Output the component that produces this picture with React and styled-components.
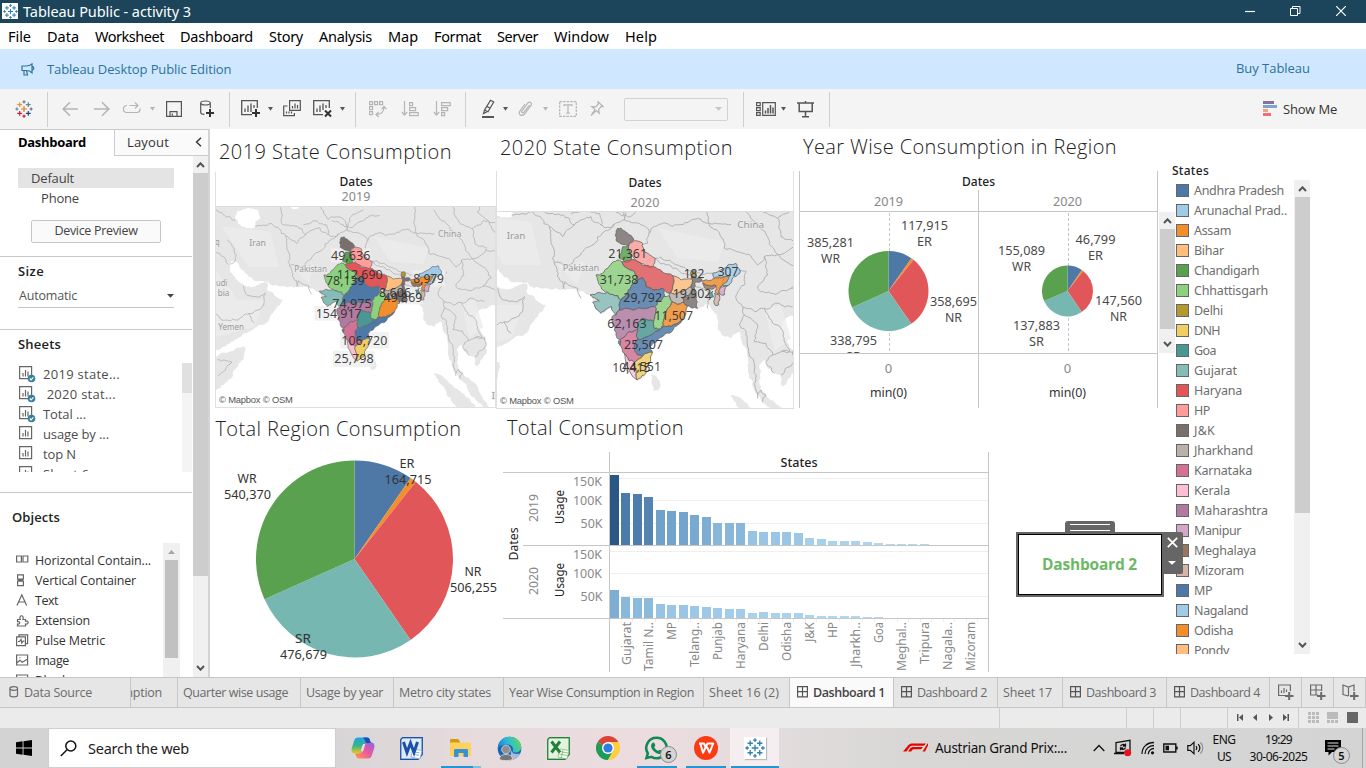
import React, { useLayoutEffect, useRef, useState } from "react";
import styled, { createGlobalStyle } from "styled-components";

const UI = `"Noto Sans", "Open Sans", sans-serif`;
const TAB = `"Open Sans", "Noto Sans", sans-serif`;

const Global = createGlobalStyle`
  * { box-sizing: border-box; }
  html, body { margin: 0; overflow: hidden; background: #fff; }
  body { font-family: ${TAB}; color: #444; }
  svg { display: block; overflow: hidden; flex: none; }
`;

/* ---------- shared pieces ---------- */
const Run = styled.span`
  display: inline-block;
  white-space: pre;
  flex: none;
  font-family: ${(p) => p.$font || TAB};
  font-size: ${(p) => p.$size || 13}px;
  font-weight: ${(p) => p.$weight || 400};
  color: ${(p) => p.$color || "inherit"};
`;

/* A single line of text whose tracking is adjusted to fill a column width. */
function Fit({ w, size, weight, color, font, children }) {
  const ref = useRef(null);
  const [track, setTrack] = useState(0);
  useLayoutEffect(() => {
    const natural = ref.current.getBoundingClientRect().width;
    setTrack((w - natural) / String(children).length);
  }, [w, children]);
  return (
    <Run ref={ref} $size={size} $weight={weight} $color={color} $font={font} style={{ letterSpacing: track }}>
      {children}
    </Run>
  );
}

const Icon = ({ w = 16, h = 16, children, vb, ...rest }) => (
  <svg width={w} height={h} viewBox={vb || `0 0 ${w} ${h}`} fill="none" stroke="currentColor" strokeWidth="1.2" {...rest}>
    {children}
  </svg>
);

const Window = styled.div`
  width: 1366px;
  height: 768px;
  display: flex;
  flex-direction: column;
  background: #fff;
`;

/* ---------- title, menu, banner ---------- */
const TitleBar = styled.header`
  height: 23px;
  background: #1c455b;
  color: #fff;
  display: flex;
  align-items: center;
  padding: 0 20px 1px 2px;
  gap: 5px;
`;
const LogoTile = styled.div`
  width: 16px;
  height: 16px;
  background: #fff;
  display: grid;
  place-items: center;
`;
const WindowButtons = styled.div`
  margin-left: auto;
  display: flex;
  gap: 35px;
`;
const MenuBar = styled.nav`
  height: 26px;
  display: flex;
  align-items: center;
  gap: 16px;
  padding: 0 0 1px 8px;
`;
const Banner = styled.div`
  height: 40px;
  background: #cfe8ff;
  display: flex;
  align-items: center;
  padding: 0 56px 0 21px;
  gap: 12px;
  color: #2d7299;
`;
const Push = styled.div`
  margin-left: auto;
  display: flex;
  align-items: center;
  padding-bottom: 2px;
`;

const Plus = ({ x, y, s = 2.4, c }) => <path d={`M${x - s} ${y}h${2 * s}M${x} ${y - s}v${2 * s}`} stroke={c} />;
const TableauMark = ({ size = 17, colors }) => {
  const c = colors || ["#e8762c", "#c72035", "#1f457e", "#59879b", "#eb912c", "#5b6591"];
  return (
    <Icon w={size} h={size} vb="0 0 18 18" strokeWidth="1.2">
      <Plus x={9} y={9} s={3} c={c[0]} />
      <Plus x={4.7} y={4.7} c={c[4]} />
      <Plus x={13.3} y={4.7} c={c[3]} />
      <Plus x={4.7} y={13.3} c={c[1]} />
      <Plus x={13.3} y={13.3} c={c[2]} />
      <Plus x={9} y={1.9} s={1.6} c={c[3]} />
      <Plus x={9} y={16.1} s={1.6} c={c[1]} />
      <Plus x={1.9} y={9} s={1.6} c={c[3]} />
      <Plus x={16.1} y={9} s={1.6} c={c[5]} />
    </Icon>
  );
};
const BLUE = Array(6).fill("#2f7fb3");

const MENU = [
  ["File", 23], ["Data", 32], ["Worksheet", 69], ["Dashboard", 73], ["Story", 34], ["Analysis", 53],
  ["Map", 30], ["Format", 47], ["Server", 41], ["Window", 55], ["Help", 32],
];

/* ---------- toolbar ---------- */
const Toolbar = styled.div`
  height: 40px;
  background: #f4f4f4;
  display: flex;
  align-items: center;
  color: #555;
`;
const Slot = styled.div`
  flex: none;
  width: ${(p) => p.$w}px;
  margin-left: ${(p) => p.$ml || 0}px;
  color: ${(p) => (p.$off ? "#b5b5b5" : "#555")};
`;
const Sep = styled.i`
  flex: none;
  width: 1px;
  height: 35px;
  background: #cfcfcf;
  margin-left: ${(p) => p.$ml}px;
`;
const Combo = styled.div`
  flex: none;
  width: 104px;
  height: 23px;
  margin: 0 0 0 20px;
  border: 1px solid #d2d2d2;
  border-radius: 2px;
  display: flex;
  align-items: center;
  justify-content: flex-end;
  padding-right: 5px;
  color: #c6c6c6;
`;
const Caret = ({ w = 5 }) => (
  <Icon w={w} h={4} vb="0 0 6 4" stroke="none" preserveAspectRatio="none"><path d="M0 0h6L3 3.8z" fill="currentColor" /></Icon>
);
const BigPlus = ({ x, y }) => <path d={`M${x - 4} ${y}h8M${x} ${y - 4}v8`} stroke="#333" strokeWidth="2" />;

function Tools() {
  return (
    <Toolbar>
      <Slot $w={18} $ml={15}><TableauMark size={18} /></Slot>
      <Sep $ml={14} />
      <Slot $w={16} $ml={14} $off><Icon strokeWidth="1.6"><path d="M16 8H1M8 1.2 1.2 8 8 14.8" /></Icon></Slot>
      <Slot $w={16} $ml={16} $off><Icon strokeWidth="1.6"><path d="M0 8h15M8 1.2 14.8 8 8 14.8" /></Icon></Slot>
      <Slot $w={18} $ml={13} $off><Icon w={18} h={14}><path d="M4 3.500H3.500a3 3 0 0 0-3 3v1a3 3 0 0 0 3 3h10.500a3 3 0 0 0 3-3v-1M6.500 3.500H15M12 .5l3 3-3 3" /></Icon></Slot>
      <Slot $w={5} $ml={9} $off><Caret /></Slot>
      <Slot $w={16} $ml={11}><Icon><path d="M.6.6h14.800v14.800H.6zM4 15v-4.400h7V15M6.300 12.500v2" /></Icon></Slot>
      <Slot $w={16} $ml={17}><Icon w={16} h={18}><path d="M1.7 3.2v9.3c0 1 1.4 1.8 3.7 1.9M11.300 3.200v4.800" /><ellipse cx="6.500" cy="3" rx="4.800" ry="2" /><BigPlus x={11} y={13} /></Icon></Slot>
      <Sep $ml={14} />
      <Slot $w={20} $ml={11}><Icon w={20} h={18}><path d="M11 14.600H.7V.7h15.600V8M4 12V8.500M7 12V5.500M10 12V3.500M13 8V5" strokeWidth="1.300" /><BigPlus x={15} y={13} /></Icon></Slot>
      <Slot $w={5} $ml={7}><Caret /></Slot>
      <Slot $w={18} $ml={10}><Icon w={18} h={18}><path d="M6.600.7h10.700v9.600H6.600zM9.500 8.500V6M12 8.500V3.500M14.500 8.500V5M4.500 6H.7v9.700h10.700V13M3.500 13.500v-2M6 13.500v-2M8.500 13.500v-2" /></Icon></Slot>
      <Slot $w={20} $ml={12}><Icon w={20} h={18}><path d="M10 14.600H.7V.7h15.600V8M4 12V8.500M7 12V5.500M10 10V3.500M13 8V5" strokeWidth="1.300" /><path d="m12 10.500 6 6M18 10.500l-6 6" stroke="#333" strokeWidth="2" /></Icon></Slot>
      <Slot $w={5} $ml={7}><Caret /></Slot>
      <Sep $ml={10} />
      <Slot $w={18} $ml={13} $off><Icon w={18} h={18}><path d="M.6 1.600h3v3h-3zM5.600 1.600h3v3h-3zM10.600 1.600h3v3h-3zM.6 6.600h3v3h-3zM.6 11.600h3v3h-3zM15 7c0 5-3 7.500-7.500 7.500M12.500 9.200 15 6.500l2.500 2.700M9.800 12 7 14.500l2.800 2.500" /></Icon></Slot>
      <Slot $w={18} $ml={14} $off><Icon w={18} h={16}><path d="M3.500 0v14M.8 11l2.700 3 2.700-3M8.600 1.600h3v3h-3zM8.600 6.600h6v3h-6zM8.600 11.600h8.600v3H8.600z" /></Icon></Slot>
      <Slot $w={18} $ml={14} $off><Icon w={18} h={16}><path d="M3.500 0v14M.8 11l2.700 3 2.700-3M8.600 1.600h8.600v3H8.600zM8.600 6.600h6v3h-6zM8.600 11.600h3v3h-3z" /></Icon></Slot>
      <Sep $ml={14} />
      <Slot $w={14} $ml={16}><Icon w={14} h={20}><path d="M8.500 1.200 11.700 3 6 12.800l-3.500-1.700zM4.800 7.300l3.300 1.900M2.500 11.200 1.500 14.500l3.500-1.800" /><path d="M0 18h12" strokeWidth="2" /></Icon></Slot>
      <Slot $w={5} $ml={7}><Caret /></Slot>
      <Slot $w={16} $ml={10} $off><Icon w={16} h={18}><path d="M11.500 5 6 12.200c-1.300 1.500-3 .2-2-1.300L9.600 3.300c2-2.300 5-.4 3.400 2L6.500 14c-2.700 3-6.700.5-4.600-3L7 4" /></Icon></Slot>
      <Slot $w={5} $ml={9} $off><Caret /></Slot>
      <Slot $w={18} $ml={11} $off><Icon w={18} h={16}><path d="M.7.7h16.600v14.600H.7z" strokeDasharray="2.500 1" /><path d="M5 5.200V3.800h8v1.400M9 3.800v8.400M7.300 12.200h3.400" /></Icon></Slot>
      <Slot $w={14} $ml={13} $off><Icon w={14} h={16}><path d="m8 .8 5.200 4.700-2-.2-2.500 3.200.5 3.700-2.800-2.700L1 14.500l4-6L1.800 5.700l4 .1L8.300 3z" /></Icon></Slot>
      <Combo><Caret w={7} /></Combo>
      <Sep $ml={15} />
      <Slot $w={20} $ml={12}><Icon w={20} h={16}><path d="M.6 1.600h3.600v3H.6zM.6 6.600h3.600v3H.6zM.6 11.600h3.600v2.800H.6zM6.700 1.600h12.600v12.800H6.700z" /><path d="M9.500 12.500v-3M12 12.500V7M14.500 12.500V4M17 12.500V6.500" strokeWidth="1.500" /></Icon></Slot>
      <Slot $w={5} $ml={5}><Caret /></Slot>
      <Slot $w={18} $ml={11}><Icon w={18} h={17}><path d="M0 2h17M2.200 2v8.500h13V2M8.500 0v2M8.500 10.500v5M5 15.800h7" strokeWidth="1.500" /></Icon></Slot>
      <Sep $ml={14} />
      <Push>
        <Slot $w={20}>
          <Icon w={15} h={17} stroke="none">
            <rect y="1" width="11" height="3" fill="#86719b" /><rect y="5" width="14" height="3" fill="#7fa3cf" />
            <rect y="9" width="5" height="3" fill="#f2a57c" /><rect y="13" width="8" height="3" fill="#f96a77" />
          </Icon>
        </Slot>
        <Slot $w={83}><Fit w={54} size={13} color="#333">Show Me</Fit></Slot>
      </Push>
    </Toolbar>
  );
}

/* ---------- side pane ---------- */
const Body = styled.main`
  height: 548px;
  display: flex;
`;
const Side = styled.aside`
  width: 210px;
  flex: none;
  border-top: 1px solid #c9c9c9;
  border-right: 2px solid #d4d4d4;
  display: flex;
  flex-direction: column;
`;
const SideTabs = styled.div`
  height: 26px;
  flex: none;
  display: flex;
`;
const SideTab = styled.div`
  flex: ${(p) => (p.$on ? "0 0 114px" : "1")};
  display: flex;
  align-items: center;
  justify-content: space-between;
  padding: 0 6px ${(p) => (p.$on ? 3 : 1)}px ${(p) => (p.$on ? 18 : 12)}px;
  color: ${(p) => (p.$on ? "#000" : "#333")};
  ${(p) => !p.$on && "background:#fafafa;border-left:1px solid #ccc;border-bottom:1px solid #ccc;"}
`;
const SideBody = styled.div`
  display: flex;
  height: 521px;
`;
const SideContent = styled.div`
  width: 193px;
  flex: none;
  overflow: hidden;
`;
const DeviceRow = styled.div`
  margin: ${(p) => (p.$on ? "12px 19px 0 18px" : "0 19px 0 18px")};
  height: 20px;
  padding-left: ${(p) => (p.$on ? 13 : 23)}px;
  display: flex;
  align-items: center;
  background: ${(p) => (p.$on ? "#e4e4e4" : "none")};
`;
const Button = styled.div`
  width: 130px;
  height: 23px;
  margin: 12px 0 13px 31px;
  border: 1px solid #c6c6c6;
  border-radius: 2px;
  background: #fafafa;
  display: flex;
  align-items: center;
  justify-content: center;
  padding-bottom: 2px;
`;
const Section = styled.section`
  width: 192px;
  height: ${(p) => p.$h}px;
  border-top: 1px solid #c9c9c9;
  overflow: hidden;
`;
const Heading = styled.h3`
  margin: ${(p) => p.$top}px 0 0 ${(p) => p.$left}px;
  height: 20px;
  display: flex;
  align-items: center;
  color: #222;
`;
const Select = styled.div`
  margin: 5px 0 0 18px;
  width: 156px;
  height: 22px;
  display: flex;
  align-items: center;
  justify-content: space-between;
  padding: 0 0 2px 1px;
  border-bottom: 1px solid #c6c6c6;
`;
const ListWrap = styled.div`
  display: flex;
  height: ${(p) => p.$h}px;
  margin: ${(p) => p.$m};
  overflow: hidden;
`;
const List = styled.div`
  width: ${(p) => p.$w}px;
  padding-top: ${(p) => p.$pt || 0}px;
`;
const Row = styled.div`
  height: 20px;
  display: flex;
  align-items: center;
  gap: ${(p) => p.$gap}px;
  color: #4d4d4d;
`;
const MiniTrack = styled.div`
  width: 10px;
  background: #f4f4f4;
  &::before { content: ""; display: block; height: 30px; background: #e0e0e0; }
`;
const Track = styled.div`
  width: ${(p) => p.$w || 16}px;
  height: ${(p) => p.$h}px;
  background: #f0f0f0;
  display: flex;
  flex-direction: column;
  align-items: center;
  flex: none;
  color: #555;
`;
const Thumb = styled.div`
  width: ${(p) => p.$w || 15}px;
  height: ${(p) => p.$h}px;
  margin-bottom: auto;
  background: ${(p) => p.$c || "#cdcdcd"};
`;
const ArrowBox = styled.div`
  height: 17px;
  display: grid;
  place-items: center;
  transform: ${(p) => (p.$down ? "rotate(180deg)" : "none")};
`;
const Arrow = ({ down }) => (
  <ArrowBox $down={down}><Icon w={9} h={6} strokeWidth="2"><path d="m1 5 3.500-3.700L8 5" /></Icon></ArrowBox>
);
const Scroll = ({ h, w, thumb }) => (
  <Track $h={h} $w={w}><Arrow /><Thumb $h={thumb} /><Arrow down /></Track>
);

const SheetIcon = ({ used }) => (
  <Icon w={17} h={18} color="#666">
    <path d="M.6 1.600h12v12H.6zM4 11.500V8M6.500 11.500V5M9 11.500V6.500" />
    {used && <g><circle cx="12.500" cy="13.500" r="3.800" fill="#35809f" stroke="none" /><path d="m10.800 13.500 1.300 1.300 2.300-2.400" stroke="#fff" /></g>}
  </Icon>
);
const SHEETS = [
  ["2019 state...", 77, 1], [" 2020 stat...", 73, 1], ["Total ...", 43, 1], ["usage by ...", 66, 0], ["top N", 33, 0], ["Sheet 6", 46, 0],
];
const OBJECTS = [
  ["Horizontal Contain...", 116, <path key="i" d="M.6 2h4.800v6H.6zM7 2h4.800v6H7z" />],
  ["Vertical Container", 101, <path key="i" d="M1.600.8h5.800v4.400H1.600zM1.600 7.200h5.800v4.400H1.600zM2 6.200h5" />],
  ["Text", 23, <path key="i" d="M1 11.500 5.800.8l4.800 10.700M2.700 8h6.200" />],
  ["Extension", 55, <path key="i" d="M1.500 5.500h2.700C2.500.5 8.500.5 7 5.500h2.500v1.700c3.500-1 3.500 3.500 0 2.800v2h-8V10c3 .6 3-3 0-2.300z" />],
  ["Pulse Metric", 70, <path key="i" d="M.6 2.800h8.800v8.800H.6zM3 2.800V.8h8.600v8.800H9.500M2 7.500h1.500L5 5.500l.8 3.500L7 7.200h1.300" />],
  ["Image", 34, <path key="i" d="M.6 1h11v10H.6zM.6 9 4 6.200l2.200 2 5.200-3M3.500 3.600h.8" />],
  ["Blank", 34, <path key="i" d="M.6 1h11v10H.6z" />],
];

function SidePane() {
  return (
    <Side>
      <SideTabs>
        <SideTab $on><Fit w={68} size={13} weight={700}>Dashboard</Fit></SideTab>
        <SideTab><Fit w={42} size={13}>Layout</Fit><Icon w={7} h={10} strokeWidth="1.400"><path d="M6 .8 1.500 5 6 9.200" /></Icon></SideTab>
      </SideTabs>
      <SideBody>
        <SideContent>
          <DeviceRow $on><Fit w={43} size={13}>Default</Fit></DeviceRow>
          <DeviceRow><Fit w={38} size={13}>Phone</Fit></DeviceRow>
          <Button><Fit w={83} size={12.5}>Device Preview</Fit></Button>
          <Section $h={73}>
            <Heading $top={4} $left={18}><Fit w={26} size={13} weight={600}>Size</Fit></Heading>
            <Select><Fit w={58} size={12.5} color="#555">Automatic</Fit><Caret w={7} /></Select>
          </Section>
          <Section $h={163}>
            <Heading $top={4} $left={18}><Fit w={43} size={13} weight={600}>Sheets</Fit></Heading>
            <ListWrap $h={109} $m="9px 0 0 19px">
              <List $w={163} $pt={1}>
                {SHEETS.map(([t, w, used]) => (
                  <Row key={t} $gap={7}><SheetIcon used={used} /><Fit w={w} size={13}>{t}</Fit></Row>
                ))}
              </List>
              <MiniTrack />
            </ListWrap>
          </Section>
          <Section $h={185}>
            <Heading $top={14} $left={12}><Fit w={48} size={13} weight={600}>Objects</Fit></Heading>
            <ListWrap $h={134} $m="16px 0 0 16px">
              <List $w={147} $pt={7}>
                {OBJECTS.map(([t, w, d]) => (
                  <Row key={t} $gap={6}><Icon w={13} h={13} color="#666">{d}</Icon><Fit w={w} size={12.5} color="#333">{t}</Fit></Row>
                ))}
              </List>
              <Track $h={150} $w={17}>
                <ArrowBox><Icon w={7} h={4} stroke="none"><path d="M0 4h7L3.500 0z" fill="#a5a5a5" /></Icon></ArrowBox>
                <Thumb $h={98} $w={13} $c="#c1c1c1" />
              </Track>
            </ListWrap>
          </Section>
        </SideContent>
        <Scroll h={521} w={15} thumb={403} />
      </SideBody>
    </Side>
  );
}

/* ---------- maps ---------- */
/* Outlines are broken into short uneven steps; the offset depends only on the
   two end points, so neighbours that share an edge stay aligned. */
function rough(str, closed, amp = 4) {
  const pts = str.trim().split(/\s+/).map((p) => p.split(",").map(Number));
  if (closed) pts.push(pts[0]);
  const out = [pts[0]];
  const split = (a, b, depth) => {
    const len = Math.hypot(b[0] - a[0], b[1] - a[1]);
    if (len < 9 || depth > 4) { out.push(b); return; }
    const flip = a[0] + a[1] * 2 > b[0] + b[1] * 2 ? -1 : 1;
    const r = Math.sin((a[0] + b[0]) * 12.9898 + (a[1] + b[1]) * 78.233) * 43758.5453;
    const off = (r - Math.floor(r) - 0.5) * Math.min(amp * 2, len * 0.4) * flip;
    const m = [(a[0] + b[0]) / 2 - ((b[1] - a[1]) / len) * off, (a[1] + b[1]) / 2 + ((b[0] - a[0]) / len) * off];
    split(a, m, depth + 1);
    split(m, b, depth + 1);
  };
  for (let i = 1; i < pts.length; i++) split(pts[i - 1], pts[i], 0);
  return "M" + out.map((p) => p.map((v) => v.toFixed(1)).join(" ")).join("L") + (closed ? "Z" : "");
}

const LAND = [
  "-90,60 980,60 980,430 940,440 880,465 870,490 875,520 910,560 915,610 900,635 875,665 868,630 850,625 830,610 820,585 805,600 808,640 815,680 850,710 880,740 905,790 930,840 915,840 885,800 850,760 825,720 800,690 785,650 770,600 762,545 745,500 722,518 700,515 680,480 668,440 650,415 620,430 590,425 575,465 500,525 478,545 484,562 462,630 438,647 410,600 384,530 372,500 363,455 372,452 362,428 330,445 312,425 305,412 297,390 275,378 215,372 130,370 110,352 60,350 25,320 0,285 -25,280 -30,300 -8,345 25,368 60,372 108,355 108,385 135,405 165,420 140,455 110,500 70,520 20,545 -25,575 -90,610",
  "-90,628 -30,610 26,592 20,640 -26,710 -90,760",
  "480,622 494,632 507,655 503,676 487,678 481,655",
  "718,690 750,700 800,745 860,800 890,840 830,840 780,780 735,720",
];
const SEAS = [
  "-5,95 30,85 75,90 82,118 65,130 62,155 30,158 0,140 -12,120",
  "195,60 225,60 222,85 200,88",
];
const BORDERS = [
  "-90,80 -50,110 -10,130", "62,150 120,140 175,185 180,235 190,295 200,335 220,370",
  "175,185 215,215 250,180 300,155 330,180 370,182", "190,295 245,295 275,260 320,215 360,190",
  "150,60 165,145 215,150 250,180", "330,180 325,145 290,130 240,145", "300,60 330,125 380,120 400,165",
  "360,190 400,165 445,175 475,200 470,235 455,240", "475,205 505,178 560,180 620,160 655,175 720,178",
  "345,130 410,155 470,120 520,110", "400,165 410,120 460,90",
  "493,280 545,310 605,330 632,342", "493,280 510,276 560,300 600,318 632,330 665,325", "745,315 765,318 760,360 740,380 735,400 755,425 760,450",
  "640,60 655,180 690,215 700,250 760,265 800,300 820,275 880,265 910,235 980,240",
  "720,90 750,130 800,175 830,215 850,255 900,300", "790,80 815,140 860,160 900,130 980,150",
  "860,160 870,215 915,230", "820,275 830,330 800,370 845,385 900,370 980,400", "900,300 930,340 900,370",
  "755,425 790,440 820,430 860,415 905,425", "760,450 745,480 765,510 770,545 790,600 800,690",
  "760,450 785,465 800,490 790,530 825,535 845,570 870,560", "820,430 835,460 860,480 880,520 895,560 870,560",
  "845,570 825,590 850,625", "870,560 905,560 910,590 870,630", "800,700 810,675 825,690 815,710",
  "610,355 632,370 655,378 652,405 650,430", "215,372 222,350 260,370 270,400",
  "-90,470 -40,495 0,495 40,470 60,505", "40,470 95,440 100,395", "-40,200 -15,240 -10,275 -30,290",
  "-90,240 -60,260 -35,290", "-75,640 -22,650 -75,700", "900,60 880,100 920,130 950,180", "20,370 30,400 80,410 100,395",
];
const STATES = [
  ["#79706e", "380,190 390,189 410,205 428,222 418,232 412,242 395,238 376,228 374,208"],
  ["#ff9d9a", "415,235 430,226 455,235 462,262 480,272 493,280 485,305 465,303 450,295 430,280 415,262 412,245"],
  ["#59a14f", "395,245 412,243 420,270 422,285 400,290 385,280 392,262"],
  ["#e15759", "400,290 425,283 440,290 452,300 478,305 515,322 545,332 548,355 535,385 520,375 480,370 465,365 455,338 440,345 432,325 412,312 392,290"],
  ["#8cd17d", "378,285 392,290 412,312 432,325 440,345 420,365 412,375 400,395 390,405 380,392 350,382 330,365 320,345 315,330 335,325 350,310 368,290"],
  ["#86bcb6", "297,390 325,382 350,382 380,392 390,405 385,435 375,450 362,425 350,430 330,445 312,425 305,412 325,408 315,402"],
  ["#4e79a7", "440,345 455,338 465,365 480,370 520,375 520,395 500,410 492,425 470,430 435,433 400,430 385,435 390,405 400,395 412,375 420,365"],
  ["#b07aa1", "385,435 400,430 435,433 470,430 492,425 488,470 470,465 455,460 440,475 440,490 415,500 388,525 375,510 370,480 363,455 375,450"],
  ["#499894", "440,475 455,460 470,465 488,470 490,490 512,490 480,510 445,525 440,520 440,490"],
  ["#8cd17d", "520,395 535,392 543,410 530,430 520,455 512,490 490,490 488,470 492,425 500,410"],
  ["#ffbe7d", "545,332 570,345 605,345 600,365 575,380 535,385 548,355"],
  ["#bab0ac", "535,385 575,380 600,365 605,380 575,400 578,412 560,418 543,410 535,392"],
  ["#79706e", "605,345 600,335 632,342 625,352 610,355 615,390 620,430 600,428 578,412 575,400 605,380 600,365"],
  ["#f28e2b", "543,410 560,418 578,412 590,422 585,435 575,465 550,478 512,490 520,455 530,430"],
  ["#4e79a7", "575,465 560,480 535,505 500,525 478,545 484,562 455,573 440,570 430,545 440,520 445,525 480,510 512,490 550,478"],
  ["#d37295", "388,525 415,500 440,490 440,520 430,545 440,570 455,573 430,592 412,585 400,565 390,545"],
  ["#499894", "383,527 390,530 388,540 382,535"],
  ["#fabfd2", "400,565 412,585 430,592 432,610 435,630 438,645 425,635 410,605"],
  ["#f1ce63", "430,592 455,573 484,562 478,590 465,610 460,630 438,645 435,630 432,610"],
  ["#a0cbe8", "665,325 700,310 715,298 735,295 738,305 748,318 730,335 718,355 708,362 692,362 700,335 670,340"],
  ["#f28e2b", "630,345 665,342 700,335 720,330 710,345 690,365 685,388 672,380 675,362 640,358"],
  ["#9d7660", "635,355 675,362 670,370 640,368"],
  ["#499894", "652,385 665,378 668,395 655,405"],
  ["#d7b5a6", "670,385 685,390 683,420 675,422"],
  ["#d4a6c8", "688,365 710,362 700,390 685,385"],
  ["#b6992d", "600,320 612,318 613,334 601,334"],
];

const MapNum = styled.text`
  font-family: ${UI};
  font-size: ${(p) => p.$s}px;
  fill: #2b2b2b;
  fill-opacity: 0.9;
`;
const Place = styled.text`
  font-family: ${UI};
  font-size: 26px;
  fill: #999;
  stroke: #ededed;
  stroke-width: 3px;
  paint-order: stroke;
`;

/* Map units are one third of a pixel. */
function IndiaMap({ w, h, vb, scale, opacity, places, numbers, boxes }) {
  const shift = scale === 1 ? undefined : `translate(81 61) scale(${scale})`;
  return (
    <svg width={w} height={h} viewBox={vb} strokeLinejoin="round">
      <g transform={shift}>
        {LAND.map((d) => <path key={d} d={rough(d, true, 5)} fill="#e6e6e6" />)}
        <path d="M-90 300 0 420 100 420 60 520-90 560ZM500 190 700 230 680 290 560 280ZM200 300 280 290 260 360ZM820 430 870 420 900 520 850 560ZM-60 150 120 170 150 300 40 300Z" fill="#ececec" opacity=".8" />
        {SEAS.map((d) => <path key={d} d={rough(d, true)} fill="#fff" />)}
        {BORDERS.map((d) => <path key={d} d={rough(d, false, 6)} fill="none" stroke="#b3b3b3" strokeWidth="3" />)}
      </g>
      {boxes.map((b) => <rect key={b} x={b[0]} y={b[1]} width={b[2]} height={b[3]} fill="#eee" opacity=".85" />)}
      {places.map(([t, x, y, len]) => <Place key={t} x={x} y={y} textLength={len} lengthAdjust="spacingAndGlyphs">{t}</Place>)}
      <g transform={shift} fillOpacity={opacity}>
        {STATES.map(([c, d]) => <path key={d} d={rough(d, true)} fill={c} stroke="#666" strokeWidth="2.500" />)}
      </g>
      {numbers.map(([t, x, y, len]) => (
        <MapNum key={t} $s={38} x={x} y={y} textLength={len} lengthAdjust="spacingAndGlyphs">{t}</MapNum>
      ))}
    </svg>
  );
}

/* ---------- dashboard zones ---------- */
const Canvas = styled.div`
  flex: 1;
  display: flex;
  position: relative;
`;
const Charts = styled.div`
  width: 960px;
  display: flex;
  flex-direction: column;
`;
const ZoneRow = styled.div`
  display: flex;
  height: ${(p) => p.$h}px;
  padding-left: 5px;
`;
const Zone = styled.section`
  width: ${(p) => p.$w}px;
  margin-right: ${(p) => p.$mr || 0}px;
  flex: none;
`;
const ScrollZone = styled(Zone)`
  padding-top: 83px;
`;
const ZoneTitle = styled.h2`
  margin: 0;
  height: ${(p) => p.$h}px;
  padding: ${(p) => p.$pt}px 0 0 ${(p) => p.$pl || 4}px;
  line-height: 26px;
  color: #222;
`;
const MapHead = styled.div`
  height: ${(p) => p.$h}px;
  border-left: 1px solid #e0e0e0;
  border-right: ${(p) => (p.$right ? 1 : 0)}px solid #e0e0e0;
  border-bottom: 1px solid #ddd;
  display: flex;
  flex-direction: column;
  align-items: center;
  padding-top: ${(p) => p.$pt}px;
  line-height: ${(p) => p.$lh}px;
`;
const MapFrame = styled.div`
  position: relative;
  height: ${(p) => p.$h}px;
  border: 1px solid #e0e0e0;
  border-top: 0;
  overflow: hidden;
`;
const Credit = styled.div`
  position: absolute;
  left: 0;
  bottom: 0;
  padding: 0 4px 1px 3px;
  background: rgba(255, 255, 255, 0.6);
  font: 9.4px/13px "Liberation Sans", sans-serif;
  letter-spacing: -0.02em;
  color: #555;
`;
const Label = styled.text`
  font-family: ${UI};
  font-size: ${(p) => p.$s || 13}px;
  font-weight: ${(p) => p.$b || 400};
  fill: ${(p) => p.$c || "#4a4a4a"};
  text-anchor: middle;
`;
const Txt = ({ x, y, len, turn, children, ...p }) => (
  <Label x={x} y={y} textLength={len} lengthAdjust="spacingAndGlyphs" transform={turn ? `rotate(-90 ${x} ${y})` : undefined} {...p}>
    {children}
  </Label>
);

const PIE_COLORS = ["#4e79a7", "#f28e2b", "#e15759", "#76b7b2", "#59a14f"];
function Pie({ cx, cy, r, values }) {
  const total = values.reduce((a, b) => a + b, 0);
  let a = 0;
  const at = (t) => `${(cx + r * Math.sin(t)).toFixed(2)} ${(cy - r * Math.cos(t)).toFixed(2)}`;
  return values.map((v, i) => {
    const from = a;
    a += (v / total) * Math.PI * 2;
    return <path key={i} d={`M${cx} ${cy}L${at(from)}A${r} ${r} 0 0 1 ${at(a)}Z`} fill={PIE_COLORS[i]} />;
  });
}

function RegionByYear() {
  const line = { stroke: "#c6c6c6", strokeWidth: 1, shapeRendering: "crispEdges" };
  const pair = (num, name, x, y, len = 47) => (
    <g key={num}><Txt x={x} y={y} len={len}>{num}</Txt><Txt x={x} y={y + 16} len={name === "WR" ? 19 : name === "NR" ? 17 : 15}>{name}</Txt></g>
  );
  return (
    <svg width="360" height="237" viewBox="799 171 360 237">
      <clipPath id="plot"><rect x="800" y="212" width="357" height="141" /></clipPath>
      <g {...line}>
        <path d="M799.500 171v237M1157.500 171v237M978.500 190v218M799 211.500h359M799 353.500h359" />
        <path d="M889.500 213v140M1068.500 213v140" strokeDasharray="3 2" />
      </g>
      <Txt x={978.500} y={186} len={33} $b={500} $c="#222" $s={12}>Dates</Txt>
      <Txt x={888.500} y={206} len={29} $c="#888">2019</Txt>
      <Txt x={1067.500} y={206} len={29} $c="#888">2020</Txt>
      <Pie cx={888.500} cy={291} r={40} values={[117915, 13000, 358695, 338795, 385281]} />
      <Pie cx={1067.500} cy={291} r={25.500} values={[46799, 5200, 147560, 137883, 155089]} />
      <g clipPath="url(#plot)">
        {pair("117,915", "ER", 924.500, 230)}
        {pair("385,281", "WR", 830.500, 247)}
        {pair("358,695", "NR", 953.500, 306)}
        {pair("338,795", "SR", 853.500, 344.500)}
        {pair("46,799", "ER", 1095.500, 244, 40)}
        {pair("155,089", "WR", 1021.500, 255)}
        {pair("147,560", "NR", 1118.500, 305)}
        {pair("137,883", "SR", 1036.500, 330)}
      </g>
      {[888.500, 1067.500].map((x) => (
        <g key={x}><Txt x={x} y={373} $c="#888">0</Txt><Txt x={x} y={397} len={37} $c="#333">min(0)</Txt></g>
      ))}
    </svg>
  );
}

function TotalPie() {
  const rows = [["ER", 407, 468, 15], ["164,715", 408, 484, 47], ["WR", 247, 483, 19], ["540,370", 247.500, 499, 47], ["NR", 473, 576, 17], ["506,255", 473.500, 592, 47], ["SR", 303, 643, 16], ["476,679", 303.500, 659, 47]];
  return (
    <svg width="288" height="226" viewBox="215 451 288 226">
      <Pie cx={354.500} cy={559} r={98.500} values={[164715, 17500, 506255, 476679, 540370]} />
      {rows.map(([t, x, y, len]) => <Txt key={t} x={x} y={y} len={len} $c="#333">{t}</Txt>)}
    </svg>
  );
}

const BARS = [
  [70, 52, 51, 48, 35, 34, 33, 30, 28, 22, 22, 22, 14, 13, 13, 13, 12, 7, 6, 4, 4, 4, 3, 2, 1, 1, 1, 1],
  [28, 21, 20, 20, 14, 13, 13, 12, 11, 10, 9, 9, 5, 6, 5, 5, 5, 3, 2, 2, 2, 2, 1, 1],
];
const RAMP = [[179, 218, 240], [145, 190, 224], [112, 161, 201], [74, 122, 169], [42, 87, 131]];
const shade = (v) => {
  const t = Math.min(0.9999, v / 70) * 4;
  const i = Math.floor(t);
  return `rgb(${RAMP[i].map((c, k) => Math.round(c + (RAMP[i + 1][k] - c) * (t - i))).join(",")})`;
};
const BAR_NAMES = [
  ["Gujarat", 43], ["Tamil N..", 49], ["MP", 18], ["Telang..", 45], ["Punjab", 38], ["Haryana", 47], ["Delhi", 29], ["Odisha", 39],
  ["J&K", 20], ["HP", 16], ["Jharkh..", 45], ["Goa", 21], ["Meghal..", 49], ["Tripura", 42], ["Nagala..", 48], ["Mizoram", 49],
];
const NameLabel = styled(Label)`
  text-anchor: end;
`;

function StateBars() {
  return (
    <svg width="488" height="225" viewBox="502 452 488 225">
      <g stroke="#efefef" shapeRendering="crispEdges">
        <path d="M610 478.500h379M610 500.500h379M610 523.500h379M610 551.500h379M610 573.500h379M610 596.500h379" />
        {BAR_NAMES.map((n, i) => <path key={n[0]} d={`M${621 + i * 23} 619v3M${632.500 + i * 23} 619v3`} />)}
      </g>
      {BARS.map((set, r) => set.map((h, i) => (
        <rect key={`${r}-${i}`} x={Math.round(610 + i * 11.480)} y={(r ? 618 : 545) - h} width="9" height={h} fill={shade(h)} shapeRendering="crispEdges" />
      )))}
      <path d="M609.500 452v220M988.500 452v220M503 472.500h486M523 545.500h466M503 618.500h486" stroke="#c6c6c6" shapeRendering="crispEdges" />
      <Txt x={799} y={467} len={37} $b={500} $c="#222" $s={12}>States</Txt>
      {[0, 73].map((o) => (
        <g key={o}>
          <Txt x={587.500} y={486 + o} len={29} $c="#888">150K</Txt>
          <Txt x={587.500} y={505 + o} len={29} $c="#888">100K</Txt>
          <Txt x={591.500} y={528 + o} len={22} $c="#888">50K</Txt>
          <Txt x={563.500} y={507 + o} len={34} turn $c="#222">Usage</Txt>
          <Txt x={538} y={508 + o} len={28} turn $c="#888">{o ? "2020" : "2019"}</Txt>
        </g>
      ))}
      <Txt x={518} y={544} len={33} turn $c="#222">Dates</Txt>
      {BAR_NAMES.map(([t, len], i) => {
        const x = 630.5 + i * 22.99;
        return <NameLabel key={t} x={x} y={622} textLength={len} lengthAdjust="spacingAndGlyphs" transform={`rotate(-90 ${x} 622)`} $c="#888">{t}</NameLabel>;
      })}
    </svg>
  );
}

/* ---------- legend ---------- */
const LegendZone = styled.section`
  width: 140px;
  padding-top: 31px;
`;
const LegendTitle = styled.div`
  height: 20px;
  padding-left: 2px;
  line-height: 19px;
`;
const LegendBody = styled.div`
  display: flex;
  height: 474px;
  overflow: hidden;
`;
const LegendList = styled.div`
  width: 124px;
  padding-left: 6px;
`;
const LegendRow = styled.div`
  display: flex;
  align-items: center;
  gap: 5px;
  height: 20px;
`;
const Swatch = styled.i`
  width: 13px;
  height: 13px;
  flex: none;
  border: 1px solid #666;
  background: ${(p) => p.$c};
`;
const LEGEND = [
  ["Andhra Pradesh", "#4e79a7", 90], ["Arunachal Prad..", "#a0cbe8", 93], ["Assam", "#f28e2b", 37], ["Bihar", "#ffbe7d", 30],
  ["Chandigarh", "#59a14f", 65], ["Chhattisgarh", "#8cd17d", 74], ["Delhi", "#b6992d", 29], ["DNH", "#f1ce63", 26],
  ["Goa", "#499894", 22], ["Gujarat", "#86bcb6", 43], ["Haryana", "#e15759", 48], ["HP", "#ff9d9a", 16], ["J&K", "#79706e", 21],
  ["Jharkhand", "#bab0ac", 59], ["Karnataka", "#d37295", 58], ["Kerala", "#fabfd2", 36], ["Maharashtra", "#b07aa1", 74],
  ["Manipur", "#d4a6c8", 47], ["Meghalaya", "#9d7660", 62], ["Mizoram", "#d7b5a6", 50], ["MP", "#4e79a7", 18],
  ["Nagaland", "#a0cbe8", 54], ["Odisha", "#f28e2b", 39], ["Pondy", "#ffbe7d", 35],
];

/* ---------- floating navigation object ---------- */
const Floating = styled.div`
  position: absolute;
  left: 806px;
  top: 403px;
  width: 148px;
  height: 65px;
  border: 2px solid #666;
  background: #fff;
`;
const FloatingInner = styled.div`
  height: 61px;
  border: 1px solid #000;
  display: grid;
  place-items: center;
  padding: 0 1px 1px 0;
`;
const Grip = styled.div`
  position: absolute;
  left: 47px;
  top: -13px;
  width: 50px;
  height: 12px;
  border-radius: 3px 3px 0 0;
  background: #666;
  padding: 3px 5px;
  &::before { content: ""; display: block; height: 5px; border: solid #fff; border-width: 1px 0; }
`;
const FloatTools = styled.div`
  position: absolute;
  left: 144px;
  top: -2px;
  width: 21px;
  height: 42px;
  border-radius: 0 2px 2px 0;
  background: #666;
  color: #fff;
  display: flex;
  flex-direction: column;
  align-items: center;
  gap: 13px;
  padding: 5px 1px 0 0;
`;

const MAP_2019 = {
  w: 281, h: 200, vb: "15 126 843 600", scale: 0.817, opacity: 1,
  places: [["Iran", 115, 243, 50], ["China", 681, 216, 70], ["Pakistan", 250, 322, 98], ["udi", 15, 363, 34], ["bia", 20, 393, 35], ["Yemen", 22, 496, 77], ["q", 12, 241, 14], ["Ir", 842, 703, 20]],
  boxes: [[360, 250, 118, 42], [310, 423, 140, 44], [388, 501, 146, 50], [366, 557, 125, 49], [504, 366, 132, 52], [604, 316, 100, 48]],
  numbers: [["49,636", 360, 286, 118], ["112,690", 377, 342, 138], ["78,139", 345, 359, 116], ["8,979", 607, 354, 92], ["8,606", 504, 396, 96], ["49,869", 518, 411, 116], ["74,975", 364, 430, 118], ["154,917", 314, 458, 138], ["106,720", 391, 541, 138], ["25,798", 370, 595, 118]],
};
const MAP_2020 = {
  w: 298, h: 196, vb: "18 141 894 588", scale: 1, opacity: 0.82,
  places: [["Iran", 47, 222, 56], ["China", 739, 188, 80], ["Pakistan", 215, 318, 110]],
  boxes: [],
  numbers: [["21,361", 352, 279, 116], ["31,738", 326, 357, 116], ["29,792", 397, 412, 116], ["182", 578, 339, 62], ["307", 680, 333, 62], ["19,902", 545, 398, 116], ["11,507", 490, 466, 116], ["62,163", 349, 490, 118], ["25,507", 399, 553, 117], ["10,415", 364, 621, 114], ["44,551", 394, 618, 116]],
};

function Dashboard() {
  return (
    <Canvas>
      <Charts>
        <ZoneRow $h={279}>
          <Zone $w={281}>
            <ZoneTitle $h={43} $pt={8}><Fit w={233} size={20} weight={300}>2019 State Consumption</Fit></ZoneTitle>
            <MapHead $h={35} $pt={2} $lh={15}><Fit w={33} size={12} weight={500} color="#222" font={UI}>Dates</Fit><Fit w={29} size={12.5} color="#888" font={UI}>2019</Fit></MapHead>
            <MapFrame $h={201}><IndiaMap {...MAP_2019} /><Credit>© Mapbox © OSM</Credit></MapFrame>
          </Zone>
          <Zone $w={298} $mr={5}>
            <ZoneTitle $h={42} $pt={4}><Fit w={233} size={20} weight={300}>2020 State Consumption</Fit></ZoneTitle>
            <MapHead $h={41} $pt={2} $lh={20} $right><Fit w={33} size={12} weight={500} color="#222" font={UI}>Dates</Fit><Fit w={29} size={12.5} color="#888" font={UI}>2020</Fit></MapHead>
            <MapFrame $h={197}><IndiaMap {...MAP_2020} /><Credit>© Mapbox © OSM</Credit></MapFrame>
          </Zone>
          <Zone $w={360}>
            <ZoneTitle $h={42} $pt={3}><Fit w={314} size={20} weight={300}>Year Wise Consumption in Region</Fit></ZoneTitle>
            <RegionByYear />
          </Zone>
          <ScrollZone $w={16}>
            <Scroll h={141} thumb={100} />
          </ScrollZone>
        </ZoneRow>
        <ZoneRow $h={269}>
          <Zone $w={287}>
            <ZoneTitle $h={43} $pt={6} $pl={0.5}><Fit w={246} size={20} weight={300}>Total Region Consumption</Fit></ZoneTitle>
            <TotalPie />
          </Zone>
          <Zone $w={488}>
            <ZoneTitle $h={44} $pt={5} $pl={5}><Fit w={177} size={20} weight={300}>Total Consumption</Fit></ZoneTitle>
            <StateBars />
          </Zone>
        </ZoneRow>
      </Charts>
      <LegendZone>
        <LegendTitle><Fit w={37} size={12} weight={500} color="#222" font={UI}>States</Fit></LegendTitle>
        <LegendBody>
          <LegendList>
            {LEGEND.map(([t, c, w]) => (
              <LegendRow key={t}><Swatch $c={c} /><Fit w={w} size={12.5} color="#6e6e6e" font={UI}>{t}</Fit></LegendRow>
            ))}
          </LegendList>
          <Scroll h={474} thumb={316} />
        </LegendBody>
      </LegendZone>
      <Floating>
        <FloatingInner><Fit w={95} size={15.5} weight={700} color="#6db865">Dashboard 2</Fit></FloatingInner>
        <Grip />
        <FloatTools>
          <Icon w={11} h={11} strokeWidth="1.800"><path d="m.8.8 9.400 9.400M10.200.8.800 10.200" /></Icon>
          <Caret w={8} />
        </FloatTools>
      </Floating>
    </Canvas>
  );
}

/* ---------- sheet tabs and status ---------- */
const TabStrip = styled.div`
  height: 31px;
  display: flex;
  background: #e6e6e6;
  border-top: 1px solid #c6c6c6;
  border-bottom: 1px solid #c6c6c6;
`;
const SheetTab = styled.div`
  width: ${(p) => p.$w}px;
  flex: none;
  display: flex;
  align-items: center;
  justify-content: ${(p) => (p.$end ? "flex-end" : "flex-start")};
  gap: 5px;
  padding: 0 ${(p) => (p.$end ? 15 : 0)}px 1px ${(p) => p.$pl ?? 5}px;
  border-right: 1px solid #c6c6c6;
  background: ${(p) => (p.$on ? "#fafafa" : "none")};
  color: ${(p) => (p.$on ? "#444" : "#6b6b6b")};
  overflow: hidden;
`;
const TABS = [
  ["Consumption", 47, 76, "", true], ["Quarter wise usage", 123, 105], ["Usage by year", 93, 77], ["Metro city states", 110, 92],
  ["Year Wise Consumption in Region", 200, 185], ["Sheet 16 (2)", 86, 70], ["Dashboard 1", 104, 72, "grid"], ["Dashboard 2", 104, 70, "grid"],
  ["Sheet 17", 65, 49], ["Dashboard 3", 104, 70, "grid"], ["Dashboard 4", 103, 70, "grid"],
];
const GridIcon = () => <Icon w={11} h={12} color="#555"><path d="M.6.6h9.800v10.300H.6zM5.500.6v10.300M.6 5.700h9.800" /></Icon>;
const StatusBar = styled.div`
  height: 20px;
  background: #ebebeb;
  display: flex;
  justify-content: flex-end;
  color: #555;
`;
const StatusCell = styled.div`
  width: ${(p) => p.$w}px;
  border-left: 1px solid #cdcdcd;
  display: flex;
  align-items: center;
  justify-content: space-evenly;
  padding-bottom: 2px;
`;

/* ---------- taskbar ---------- */
const TaskBar = styled.footer`
  height: 40px;
  display: flex;
  background: linear-gradient(90deg, #d3d3d3 0, #d6d5d5 24%, #e6dadd 34%, #ecdce0 48%, #e2dcdd 57%, #d8d7d6 66%, #d4d4d4 100%);
  color: #111;
  align-items: center;
`;
const Start = styled.div`
  width: 49px;
  padding-left: 16px;
`;
const Search = styled.div`
  width: 286px;
  height: 38px;
  background: #fff;
  box-shadow: 0 0 0 1px #cfcfcf;
  display: flex;
  align-items: center;
  gap: 11px;
  padding-left: 11px;
  margin-right: 3px;
`;
const AppSlot = styled.div`
  position: relative;
  width: 49px;
  height: 40px;
  display: grid;
  place-items: center;
  background: ${(p) => (p.$on ? "#f4eef0" : "none")};
  &::after {
    content: "";
    position: absolute;
    bottom: 0;
    height: 2px;
    width: ${(p) => (p.$run ? (p.$on ? 48 : 40) : 0)}px;
    background: ${(p) => (p.$stack ? "linear-gradient(90deg, #2695d2 80%, #7fbfe2 80%)" : "#2695d2")};
  }
`;
const Badge = styled.span`
  position: absolute;
  left: 28px;
  top: 18px;
  width: 17px;
  height: 17px;
  border: 1px solid #8a8a8a;
  border-radius: 50%;
  background: #d5d5d5;
  font: 600 11px/15px ${UI};
  text-align: center;
  color: #111;
`;
const Tray = styled.div`
  margin-left: auto;
  display: flex;
  align-items: center;
  height: 40px;
`;
const TrayItem = styled.div`
  width: ${(p) => p.$w}px;
  display: flex;
  flex-direction: column;
  align-items: ${(p) => (p.$left ? "flex-start" : "center")};
  line-height: 17px;
  position: relative;
`;
const TrayBadge = styled(Badge)`
  left: 19px;
  top: 7px;
`;
const Peek = styled.i`
  width: 4px;
  height: 40px;
  border-left: 1px solid #a5a5a5;
`;

const Copilot = () => (
  <Icon w={24} h={24} stroke="none">
    <defs>
      <linearGradient id="cpA" x1="0" y1="0" x2="0" y2="1"><stop offset="0" stopColor="#1fa3ee" /><stop offset=".5" stopColor="#35b58a" /><stop offset="1" stopColor="#e9c91f" /></linearGradient>
      <linearGradient id="cpB" x1="1" y1="0" x2="0" y2="1"><stop offset="0" stopColor="#8f63e0" /><stop offset=".5" stopColor="#ea5aa0" /><stop offset="1" stopColor="#ff9a45" /></linearGradient>
    </defs>
    <path d="M7 1.500h9c2 0 2.700 1.500 3.200 3.500L20 7h-4c-2 0-2.800 1-3.300 3l-1.500 5c-.6 2-1.700 2.500-3.700 2.500H3.700C1 17.500 0 15 .8 12L3 5c.7-2.400 2-3.500 4-3.500z" fill="url(#cpA)" />
    <path d="M17 22.500H8c-2 0-2.700-1.500-3.200-3.500l-.5-1.500H8c2 0 2.800-1 3.300-3l1.500-5c.6-2 1.700-3 3.700-3h3.800c2.700 0 3.700 2.500 2.900 5.500L21 19c-.7 2.400-2 3.500-4 3.500z" fill="url(#cpB)" />
    <path d="M12 1.500h4c2 0 2.700 1.500 3.200 3.500L20 7h-4.500c-1-.3-1.500-4-3.500-5.500z" fill="#1550b8" />
    <path d="m9.800 14.500 1.700-5.300c.3-.8.700-1.200 1.500-1.200h1.300l-1.800 6c-.3 1-.7 1.500-1.500 1.500z" fill="#eadfe2" />
  </Icon>
);
/* Framed document icon: a bold letter shape over a folded page. */
const OfficeTile = ({ dark, mid, tint, mark, page }) => (
  <Icon w={23} h={23} stroke="none">
    <path d="M2.500.7h19.800v16.800l-4.300 4.800H.7V2.500z" fill={tint} stroke={dark} strokeWidth="1.200" />
    <path d="M2.700 2h18.300v15l-3.500 4H2V2.700z" fill="#fff" opacity=".55" />
    <path d="m13 12 9 1.500-2 8.500-9-2z" fill="#fff" stroke={mid} strokeWidth=".7" />
    <path d={page} stroke={mid} strokeWidth=".8" />
    <path d={mark} stroke={dark} strokeWidth="3" />
  </Icon>
);
const Folder = () => (
  <Icon w={22} h={20} stroke="none">
    <path d="M0 2.500C0 1.500.5 1 1.500 1H8l2 2.500v2H0z" fill="#d69a12" /><path d="M0 4.500h21V18H0z" fill="#ffd25e" />
    <path d="M4 19v-6.500C4 11.500 4.500 11 5.500 11h11c1 0 1.500.5 1.500 1.500V19h-4.500v-4h-5v4z" fill="#3592d6" />
  </Icon>
);
const Edge = () => (
  <Icon w={25} h={25} stroke="none">
    <defs><linearGradient id="ed" x1="0" y1=".6" x2="1" y2=".3"><stop offset="0" stopColor="#1c7fd4" /><stop offset=".45" stopColor="#2cb9dc" /><stop offset="1" stopColor="#5fd95a" /></linearGradient></defs>
    <circle cx="12.500" cy="12.500" r="11.800" fill="#1766b5" />
    <path d="M.8 12C1.500 5 6.500.7 12.500.7 19 .7 24.300 5.500 24.300 11c0 3.500-3 5.500-6 5.500-2 0-3-.8-2.500-2 1-3-1.500-6-5.300-6C6 8.500 2 10 .8 12z" fill="url(#ed)" />
    <path d="M14 14c2 5 6 4 9 3.500-1.500 3.500-5 6.500-9.500 6.500z" fill="#e9dfe2" opacity=".7" />
    <circle cx="9" cy="13.500" r="4.300" fill="#8f8f8f" stroke="#ddd" strokeWidth=".8" /><path d="M2.500 23.500c0-3.700 3-5 6.500-5s6.500 1.300 6.500 5c-3 1.500-10 1.500-13 0z" fill="#757575" stroke="#ddd" strokeWidth=".8" />
  </Icon>
);
const Chrome = () => (
  <Icon w={24} h={24} stroke="none">
    <path d="M12 12 1.600 6A12 12 0 0 1 22.400 6z" fill="#db4437" /><path d="M12 12 1.600 6A12 12 0 0 0 12 24l5.200-9z" fill="#1f9d57" />
    <path d="M12 12h0l5.200 3L12 24A12 12 0 0 0 22.400 6H12z" fill="#ffcd40" /><circle cx="12" cy="12" r="6" fill="#fff" /><circle cx="12" cy="12" r="4.600" fill="#2f7de1" />
  </Icon>
);
const WhatsApp = () => (
  <Icon w={26} h={25} stroke="none">
    <path d="M12.500 1.800a10.200 10.200 0 0 0-8.700 15.600L2.500 22l4.900-1.200A10.200 10.200 0 1 0 12.500 1.800z" stroke="#0f8a56" strokeWidth="2.600" />
    <path d="M8.700 6.700c1-.5 1.500-.2 2 1l.6 1.600c.2.700-1 1.400-.9 1.900.8 1.700 2 2.800 3.700 3.500.6.200 1.300-1.300 1.900-1l2.100 1c.8.500.5 2.700-1.700 3.300-4.600.8-10-5.200-9.300-8.700.2-1 .8-2.200 1.600-2.600z" fill="#0f8a56" />
  </Icon>
);
const Wps = () => (
  <Icon w={24} h={24}><circle cx="12" cy="12" r="12" fill="#fb3b14" stroke="none" /><path d="M5 7.500h5l2 4.500M6.300 7.500 9 16.700l4.500-9.200h5.700L15.500 16.700 13 11" stroke="#fff" strokeWidth="2" strokeLinejoin="round" /></Icon>
);
const TableauTile = styled(LogoTile)`
  width: 22px;
  height: 22px;
  box-shadow: 1px 1px 1px #bbb;
`;

function Task() {
  return (
    <TaskBar>
      <Start><Icon w={16} h={16} stroke="none"><path d="M0 2.300 6.600 1.300v6.300H0zM7.500 1.200 16 0v7.600H7.500zM0 8.500h6.600v6.300L0 13.800zM7.500 8.500H16V16l-8.500-1.200z" fill="#000" /></Icon></Start>
      <Search>
        <Icon w={17} h={17} strokeWidth="1.500"><circle cx="10.800" cy="6" r="5" /><path d="M7 9.800.8 16" /></Icon>
        <Fit w={101} size={14.5} font={UI} color="#222">Search the web</Fit>
      </Search>
      <AppSlot><Copilot /></AppSlot>
      <AppSlot><OfficeTile dark="#1c4fa8" mid="#6f97d6" tint="#b9d2f4" mark="M3.500 5 7 15.500 10.500 6 14 15.500 17.500 5" page="M14.500 15l5 .8M14 17.500l5 .8" /></AppSlot>
      <AppSlot $run $stack><Folder /></AppSlot>
      <AppSlot><Edge /></AppSlot>
      <AppSlot><OfficeTile dark="#23803a" mid="#74b56b" tint="#c2e4ba" mark="M4.500 4.500 13 15.500M13 4.500 4.500 15.500" page="M12.500 14.500l8.500 1.500M12 17l8.500 1.500M16 13l-1.800 8" /></AppSlot>
      <AppSlot><Chrome /></AppSlot>
      <AppSlot $run><WhatsApp /><Badge>6</Badge></AppSlot>
      <AppSlot $run><Wps /></AppSlot>
      <AppSlot $on $run><TableauTile><TableauMark size={20} colors={BLUE} /></TableauTile></AppSlot>
      <Tray>
        <TrayItem $w={32} $left><Icon w={25} h={10} stroke="none"><path d="M0 8.500 5.500 2C7 .5 8 .5 10 .5h13l-2 2.300H10c-1.800 0-2.500.3-3.500 1.500L3.500 8.500zM5 8.500 7.200 5.500C8 4.500 8.700 4 10 4h10l-1.800 2.200h-7c-1 0-1.500.2-2 .9l-1 1.400zM19.500 8.500 24.500.5H26l-4 8z" fill="#e10600" /></Icon></TrayItem>
        <TrayItem $w={158} $left><Fit w={132} size={13.5} font={UI}>Austrian Grand Prix:...</Fit></TrayItem>
        <TrayItem $w={12}><Icon w={12} h={8} strokeWidth="1.300"><path d="m.7 7 5.300-5.500L11.300 7" /></Icon></TrayItem>
        <TrayItem $w={36}><Icon w={18} h={18} strokeWidth="1.300"><path d="M2 3.700 16 1.300v12.200H2zM0 14.500h10M6.500 7.200a2.600 2.600 0 0 1 4.500-.7M11.500 4.500v2.500H9M11.500 8.500a2.600 2.600 0 0 1-4.500.8M6.500 11.300V9H9" /><circle cx="13.700" cy="13.700" r="3.500" fill="#e81123" stroke="none" /></Icon></TrayItem>
        <TrayItem $w={14}><Icon w={14} h={14} strokeWidth="1.300"><path d="M1 13C1 6 6 1.500 13 1.500M4 13c0-5 4-8.500 9-8.500M7.300 13.300c0-3.300 2.500-5.800 5.700-5.800" /><circle cx="11.500" cy="11.800" r="1.600" fill="#111" stroke="none" /></Icon></TrayItem>
        <TrayItem $w={30}><Icon w={15} h={10} strokeWidth="1.400"><path d="M.8 1h12v8H.8zM14 3.500v3" /><path d="M2.500 2.700H6v4.600H2.500z" fill="#111" stroke="none" /></Icon></TrayItem>
        <TrayItem $w={20}><Icon w={17} h={14}><path d="M.8 4.700h2.500L7 1.300v11.400L3.300 9.300H.8zM9 5c1 1.300 1 2.700 0 4M11.200 3.200c2 2.300 2 5.300 0 7.600" /><path d="M13.500 1.500c3 3.300 3 7.700 0 11" stroke="#888" /></Icon></TrayItem>
        <TrayItem $w={38}><Fit w={23} size={12} font={UI}>ENG</Fit><Fit w={14} size={12} font={UI}>US</Fit></TrayItem>
        <TrayItem $w={71}><Fit w={27} size={12} font={UI}>19:29</Fit><Fit w={58} size={12} font={UI}>30-06-2025</Fit></TrayItem>
        <TrayItem $w={48}>
          <Icon w={48} h={16} stroke="none"><path d="M11 0h16v12H18l-3.500 3.500V12H11z" fill="#000" /><path d="M13.500 3h11M13.500 6h11M13.500 9h7" stroke="#ddd" /></Icon>
          <TrayBadge>5</TrayBadge>
        </TrayItem>
        <Peek />
      </Tray>
    </TaskBar>
  );
}

export default function App() {
  return (
    <Window>
      <Global />
      <TitleBar>
        <LogoTile><TableauMark size={15} colors={BLUE} /></LogoTile>
        <Fit w={168} size={14.5} font={UI}>Tableau Public - activity 3</Fit>
        <WindowButtons>
          <Icon w={10} h={10}><path d="M0 5.500h10" /></Icon>
          <Icon w={11} h={10} strokeWidth="1"><path d="M.5 2.500h7v7h-7zM2.500 2.500v-2h7.500v7H7.500" /></Icon>
          <Icon w={10} h={10}><path d="m0 0 10 10M10 0 0 10" /></Icon>
        </WindowButtons>
      </TitleBar>
      <MenuBar>{MENU.map(([t, w]) => <Fit key={t} w={w} size={14.5} font={UI} color="#000">{t}</Fit>)}</MenuBar>
      <Banner>
        <Icon w={14} h={13}><path d="M1 3h4c2.500 0 4.500-.7 6-2.200v9C9.500 8.200 7.500 7.500 5 7.500H1zM3 7.700V12h3.500L5.500 7.700M11.500 3.600c1.800.4 1.800 3 0 3.400" /></Icon>
        <Fit w={184.5} size={13}>Tableau Desktop Public Edition</Fit>
        <Push><Fit w={74} size={13}>Buy Tableau</Fit></Push>
      </Banner>
      <Tools />
      <Body><SidePane /><Dashboard /></Body>
      <TabStrip>
        <SheetTab $w={131} $pl={9}><Icon w={10} h={12}><path d="M1 2.800v6.400c0 2.200 7.500 2.200 7.500 0V2.800" /><ellipse cx="4.750" cy="2.500" rx="3.800" ry="1.800" /></Icon><Fit w={68} size={12.5}>Data Source</Fit></SheetTab>
        {TABS.map(([t, w, tw, icon, end]) => (
          <SheetTab key={t} $w={w} $end={end} $on={t === "Dashboard 1"} $pl={icon ? 7 : 5}>
            {icon && <GridIcon />}<Fit w={tw} size={12.5} weight={t === "Dashboard 1" ? 600 : 400}>{t}</Fit>
          </SheetTab>
        ))}
        <SheetTab $w={32} $pl={8}><Icon w={16} h={16}><path d="M8 11.500H.6V1h11.800v6M3.500 9V6.500M6 9V4M8.500 8V5.500" /><path d="M7 12h8.500M11.200 8v8" strokeWidth="2" /></Icon></SheetTab>
        <SheetTab $w={32} $pl={8}><Icon w={16} h={16}><path d="M8 11H.6V1h11v6M6 1v10M.6 6h11" /><path d="M7 12h8.500M11.200 8v8" strokeWidth="2" /></Icon></SheetTab>
        <SheetTab $w={32} $pl={8}><Icon w={17} h={16}><path d="M6.500 12 1 10.500V1l5.500 2L12 1v6M6.500 3v9" /><path d="M8 12h8.500M12.200 8v8" strokeWidth="2" /></Icon></SheetTab>
      </TabStrip>
      <StatusBar>
        <StatusCell $w={127} /><StatusCell $w={27} /><StatusCell $w={27} /><StatusCell $w={47} />
        <StatusCell $w={71}>
          {["M0 0h1.500v7H0zM6 0v7L2 3.500z", "M5 0v7L1 3.500z", "M1 0v7l4-3.500z", "M0 0v7l4-3.500zM4.500 0H6v7H4.500z"].map((d) => (
            <Icon key={d} w={6} h={7} stroke="none"><path d={d} fill="#555" /></Icon>
          ))}
        </StatusCell>
        <StatusCell $w={68}>
          <Icon w={11} h={11} stroke="none"><path d="M0 0h3v3H0zM4 0h3v3H4zM8 0h3v3H8zM0 4h3v3H0zM4 4h3v3H4zM8 4h3v3H8zM0 8h3v3H0zM4 8h3v3H4zM8 8h3v3H8z" fill="#bbb" /></Icon>
          <Icon w={11} h={11} stroke="none"><path d="M0 0h11v7H0zM0 8h3v3H0zM4 8h3v3H4zM8 8h3v3H8z" fill="#bbb" /></Icon>
          <Icon w={11} h={11} stroke="none"><path d="M0 0h11v11H0z" fill="#666" /></Icon>
        </StatusCell>
      </StatusBar>
      <Task />
    </Window>
  );
}
